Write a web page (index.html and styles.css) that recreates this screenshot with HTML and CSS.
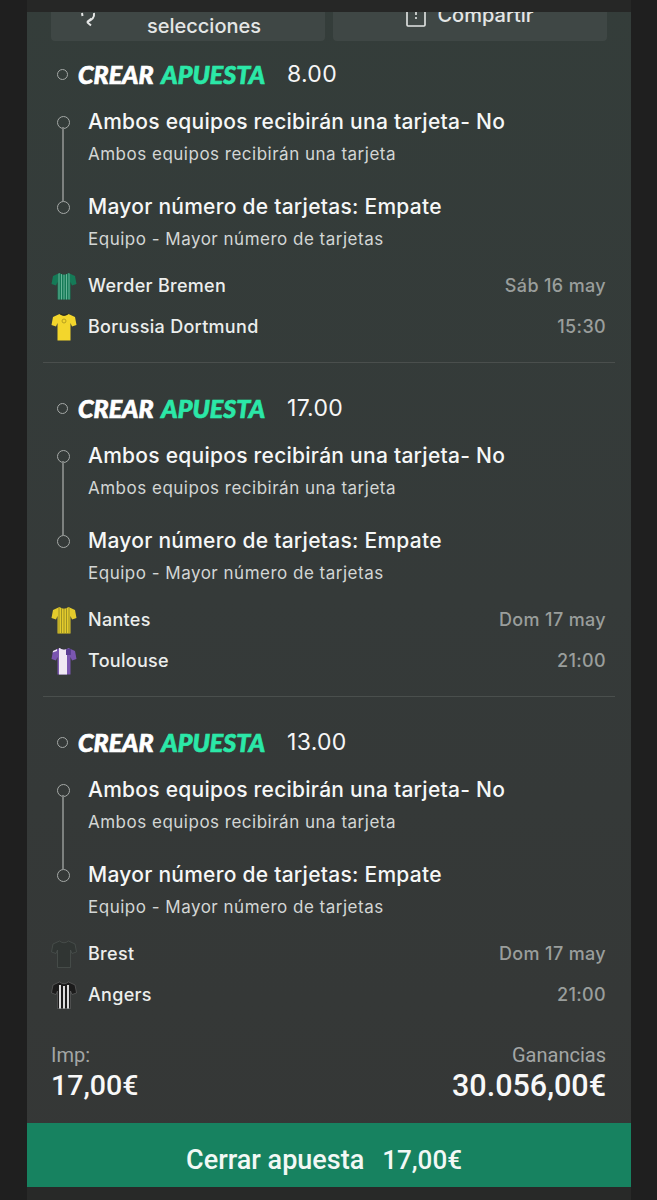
FILE: index.html
```html
<!DOCTYPE html>
<html lang="es">
<head>
<meta charset="utf-8">
<title>Apuesta</title>
<link rel="stylesheet" href="styles.css">
</head>
<body>
<svg class="defs" width="0" height="0" aria-hidden="true">
  <defs>
    <path id="shirt" d="M8.5 1 L2 4 L0.5 12 L5 13.5 L6.5 10 L6.5 27.5 L19.5 27.5 L19.5 10 L21 13.5 L25.5 12 L24 4 L17.5 1 Q13 4.5 8.5 1 Z"/>
    <clipPath id="shirt-clip"><use href="#shirt"/></clipPath>
  </defs>
</svg>
<main class="panel">
  <div class="actions">
    <div class="action action-left">
      <svg class="action-icon swap" width="22" height="32" viewBox="0 0 22 32"><path d="M15 9 Q16 15 8 18 M8 18 L12.5 14.5 M8 18 L12 21.5 M3 9 L3.5 12" fill="none" stroke="#e4e6e5" stroke-width="2"/></svg>
      <div class="action-text">selecciones</div>
    </div>
    <div class="action action-right">
      <svg class="action-icon" width="20" height="24" viewBox="0 0 20 24"><path d="M5 3 H2 Q1 3 1 4 V19 Q1 20 2 20 H18 Q19 20 19 19 V4 Q19 3 18 3 H15 M10 4 V9 M10 11 V13" fill="none" stroke="#e4e6e5" stroke-width="1.6"/></svg>
      <div class="share-text">Compartir</div>
    </div>
  </div>

  <section class="bet">
    <div class="bet-head"><span class="dot"></span><span class="brand"><span class="brand-w">CREAR</span> <span class="brand-g">APUESTA</span></span><span class="odds">8.00</span></div>
    <div class="legs">
      <div class="leg leg-first"><div class="leg-title">Ambos equipos recibirán una tarjeta- No</div><div class="leg-sub">Ambos equipos recibirán una tarjeta</div></div>
      <div class="leg"><div class="leg-title">Mayor número de tarjetas: Empate</div><div class="leg-sub">Equipo - Mayor número de tarjetas</div></div>
    </div>
    <div class="teams">
      <div class="team">
        <svg class="kit" viewBox="0 0 26 28"><use href="#shirt" fill="#157a57"/><g clip-path="url(#shirt-clip)" stroke="#7cc3a8" stroke-width="0.8"><path d="M8 0V28M10.5 0V28M13 0V28M15.5 0V28M18 0V28"/></g></svg>
        <span class="team-name">Werder Bremen</span><span class="team-meta">Sáb 16 may</span>
      </div>
      <div class="team">
        <svg class="kit" viewBox="0 0 26 28"><use href="#shirt" fill="#f3d62c"/><path d="M8.5 1Q13 4.5 17.5 1L16 0.5 Q13 2.5 10 0.5Z" fill="#2a2a1e"/><circle cx="13" cy="8" r="2" fill="none" stroke="#b7a020"/></svg>
        <span class="team-name">Borussia Dortmund</span><span class="team-meta">15:30</span>
      </div>
    </div>
  </section>

  <section class="bet">
    <div class="bet-head"><span class="dot"></span><span class="brand"><span class="brand-w">CREAR</span> <span class="brand-g">APUESTA</span></span><span class="odds">17.00</span></div>
    <div class="legs">
      <div class="leg leg-first"><div class="leg-title">Ambos equipos recibirán una tarjeta- No</div><div class="leg-sub">Ambos equipos recibirán una tarjeta</div></div>
      <div class="leg"><div class="leg-title">Mayor número de tarjetas: Empate</div><div class="leg-sub">Equipo - Mayor número de tarjetas</div></div>
    </div>
    <div class="teams">
      <div class="team">
        <svg class="kit" viewBox="0 0 26 28"><use href="#shirt" fill="#e4cb2c"/><g clip-path="url(#shirt-clip)" stroke="#8c8422" stroke-width="0.8"><path d="M8 0V28M10.5 0V28M13 0V28M15.5 0V28M18 0V28"/></g></svg>
        <span class="team-name">Nantes</span><span class="team-meta">Dom 17 may</span>
      </div>
      <div class="team">
        <svg class="kit" viewBox="0 0 26 28"><use href="#shirt" fill="#7a56b0"/><g clip-path="url(#shirt-clip)"><path d="M8 0H16V28H8Z" fill="#efe8f3"/><path d="M0 0H6V4L0 6Z" fill="#efe8f3"/><path d="M15 2H20V8H15Z" fill="#5a3d92"/></g></svg>
        <span class="team-name">Toulouse</span><span class="team-meta">21:00</span>
      </div>
    </div>
  </section>

  <section class="bet bet-last">
    <div class="bet-head"><span class="dot"></span><span class="brand"><span class="brand-w">CREAR</span> <span class="brand-g">APUESTA</span></span><span class="odds">13.00</span></div>
    <div class="legs">
      <div class="leg leg-first"><div class="leg-title">Ambos equipos recibirán una tarjeta- No</div><div class="leg-sub">Ambos equipos recibirán una tarjeta</div></div>
      <div class="leg"><div class="leg-title">Mayor número de tarjetas: Empate</div><div class="leg-sub">Equipo - Mayor número de tarjetas</div></div>
    </div>
    <div class="teams">
      <div class="team">
        <svg class="kit" viewBox="0 0 26 28"><use href="#shirt" fill="#303533" stroke="#4a504e" stroke-width="0.8"/></svg>
        <span class="team-name">Brest</span><span class="team-meta">Dom 17 may</span>
      </div>
      <div class="team">
        <svg class="kit" viewBox="0 0 26 28"><use href="#shirt" fill="#1b1b1b" stroke="#777" stroke-width="0.5"/><g clip-path="url(#shirt-clip)" stroke="#f1f1f1" stroke-width="1.8"><path d="M9 4V28M13 5V28M17 4V28"/></g></svg>
        <span class="team-name">Angers</span><span class="team-meta">21:00</span>
      </div>
    </div>
  </section>

  <div class="summary">
    <div class="sum-col"><span class="sum-label">Imp:</span><span class="sum-value sum-stake">17,00€</span></div>
    <div class="sum-col sum-right"><span class="sum-label">Ganancias</span><span class="sum-value sum-win">30.056,00€</span></div>
  </div>
  <div class="cta"><span class="cta-label">Cerrar apuesta</span><span class="cta-amount">17,00€</span></div>
  <div class="foot"></div>
</main>
</body>
</html>
```
FILE: styles.css
```css
* { box-sizing: border-box; }
html, body { margin: 0; height: 1200px; overflow: hidden; background: #1f1f1f; }
body { font-family: Inter, Roboto, "Liberation Sans", sans-serif; color: #f4f5f5; }
.defs { position: absolute; }
.panel {
  width: 604px;
  height: 1200px;
  margin-left: 27px;
  padding-top: 12px;
  background: linear-gradient(180deg, #343d3a 0%, #353a39 50%, #353736 100%);
  box-shadow: inset 0 12px 0 #262726;
  display: flex;
  flex-direction: column;
}
.actions {
  height: 29px;
  margin: 0 24px;
  display: flex;
  gap: 8px;
  overflow: hidden;
  align-items: flex-end;
  flex: none;
}
.action {
  flex: 1;
  height: 58px;
  background: #3f4745;
  border-radius: 4px;
  position: relative;
  display: flex;
  justify-content: center;
  align-items: flex-end;
  font-size: 20px;
  font-weight: 500;
  color: #e4e6e5;
}
.action-text { line-height: 28px; padding: 0 0 1px 32px; }
.action-icon { position: absolute; }
.action-icon.swap { left: 28px; bottom: 5px; }
.action-right { gap: 11px; padding-bottom: 13px; }
.action-right .action-icon { position: static; margin-bottom: -2px; }
.share-text { line-height: 28px; margin-bottom: -1px; }

.bet { margin: 0 16px; padding: 32px 0 0 8px; border-bottom: 1px solid #4a4f4d; height: 334px; flex: none; }
.actions + .bet { height: 322px; padding-top: 20px; }
.bet-last { border-bottom: 0; height: 323px; }
.bet-head { display: flex; align-items: center; height: 26px; margin-bottom: 21px; }
.dot, .leg::before {
  width: 11px; height: 11px; border-radius: 50%; border: 1.5px solid #a5a9a7; flex: none;
}
.dot { margin-left: 6px; margin-right: 10px; }
.brand {
  font-family: Lato, sans-serif;
  font-weight: 900;
  font-style: italic;
  font-size: 25px;
  letter-spacing: 0;
  word-spacing: 3px;
  -webkit-text-stroke: 0.7px currentColor;
  width: 209px;
  white-space: pre;
}
.brand-w { color: #fff; }
.brand-g { color: #2be8a8; }
.odds { font-size: 23px; font-weight: 400; letter-spacing: 0.3px; color: #f6f6f6; }
.legs { position: relative; padding-left: 37px; }
.leg { position: relative; height: 85px; }
.leg::before { content: ""; position: absolute; left: -31px; top: 8px; }
.leg-first::after { content: ""; position: absolute; left: -26px; top: 19px; width: 2px; height: 74px; background: #7d817f; }
.leg-title { font-size: 21px; font-weight: 500; letter-spacing: 0.26px; line-height: 28px; white-space: nowrap; color: #f6f7f7; }
.leg-sub { font-size: 17px; font-weight: 400; letter-spacing: 0.5px; line-height: 22px; margin-top: 7px; color: #d3d6d5; white-space: nowrap; }
.teams { margin-top: -13px; padding-right: 9px; }
.team { display: flex; align-items: center; height: 41px; }
.kit { width: 26px; height: 28px; margin-right: 11px; flex: none; }
.team-name { flex: 1; font-size: 18px; font-weight: 500; letter-spacing: 0.3px; color: #eceeed; }
.team-meta { font-size: 18px; font-weight: 500; letter-spacing: 0.35px; color: #9a9e9c; }

.summary { display: flex; justify-content: space-between; margin: 23px 25px 0 24px; flex: 1; }
.sum-col { display: flex; flex-direction: column; }
.sum-right { align-items: flex-end; }
.sum-label { font-family: Roboto, sans-serif; font-size: 20px; line-height: 24px; color: #a3a6a5; }
.sum-value { font-family: Roboto, sans-serif; font-weight: 500; line-height: 36px; margin-top: 1px; color: #f8f8f8; }
.sum-stake { font-size: 28.5px; }
.sum-win { font-size: 30.5px; }
.cta {
  flex: none;
  height: 64px;
  padding: 10px 10px 0 0;
  background: #178260;
  display: flex;
  justify-content: center;
  align-items: center;
  gap: 18px;
  font-family: Roboto, sans-serif;
  font-weight: 500;
  color: #f2f8f5;
}
.cta-label { font-size: 27px; }
.cta-amount { font-size: 26px; }
.foot { height: 13px; flex: none; background: #282928; }
```
